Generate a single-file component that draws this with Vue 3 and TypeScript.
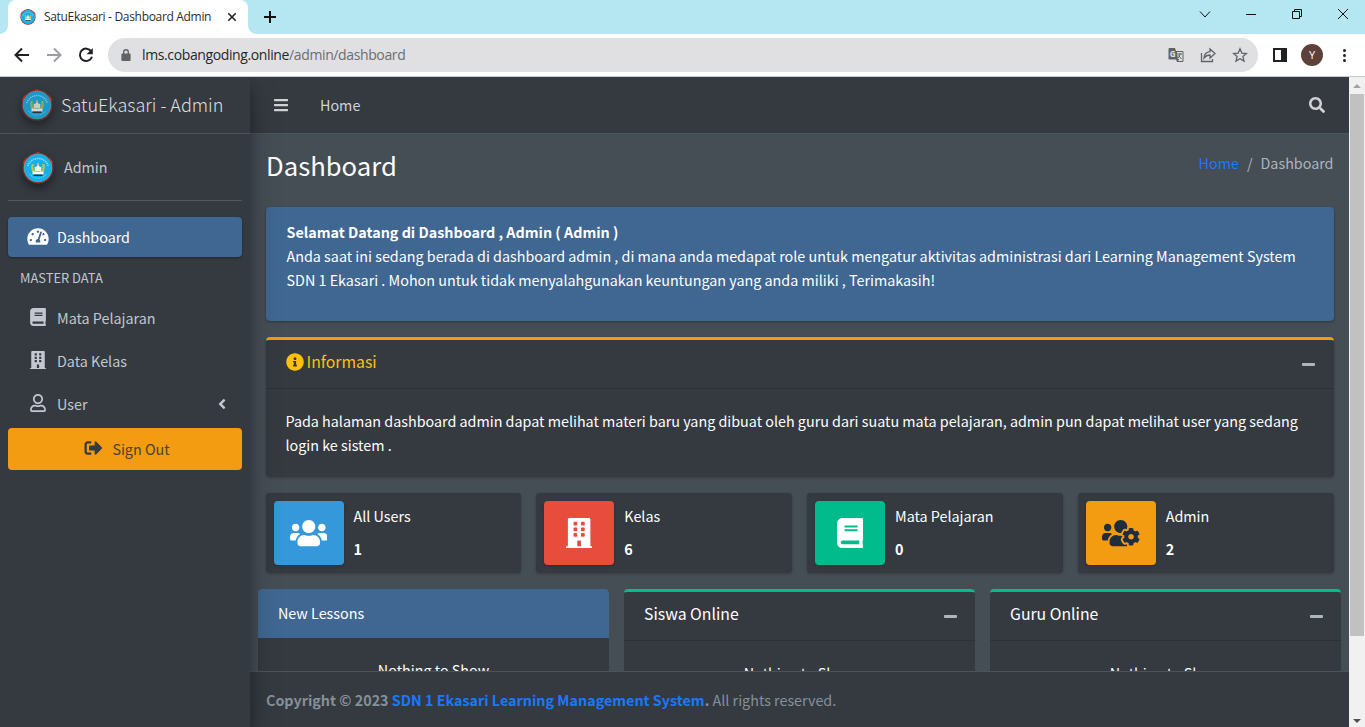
<script setup lang="ts">
interface Glyph { w: number; d: string }

const windows = [76, 172, 268]
  .map((y) => [128, 256].map((x) => `M${x} ${y}c0-6.6 5.4-12 12-12h40c6.6 0 12 5.4 12 12v40c0 6.6-5.4 12-12 12h-40c-6.6 0-12-5.4-12-12z`).join(''))
  .join('')

const icons: Record<string, Glyph> = {
  bars: { w: 448, d: 'M16 132h416c8.837 0 16-7.163 16-16V76c0-8.837-7.163-16-16-16H16C7.163 60 0 67.163 0 76v40c0 8.837 7.163 16 16 16zm0 160h416c8.837 0 16-7.163 16-16v-40c0-8.837-7.163-16-16-16H16c-8.837 0-16 7.163-16 16v40c0 8.837 7.163 16 16 16zm0 160h416c8.837 0 16-7.163 16-16v-40c0-8.837-7.163-16-16-16H16c-8.837 0-16 7.163-16 16v40c0 8.837 7.163 16 16 16z' },
  search: { w: 512, d: 'M505 442.7L405.3 343c-4.5-4.5-10.6-7-17-7H372c27.6-35.3 44-79.7 44-128C416 93.1 322.9 0 208 0S0 93.1 0 208s93.1 208 208 208c48.3 0 92.7-16.4 128-44v16.3c0 6.4 2.5 12.5 7 17l99.7 99.7c9.4 9.4 24.6 9.4 33.9 0l28.3-28.3c9.4-9.4 9.4-24.6.1-34zM208 336c-70.7 0-128-57.2-128-128 0-70.7 57.2-128 128-128 70.7 0 128 57.2 128 128 0 70.7-57.2 128-128 128z' },
  gauge: { w: 576, d: 'M288 32C128.94 32 0 160.94 0 320c0 52.8 14.25 102.26 39.06 144.8 5.61 9.62 16.3 15.2 27.44 15.2h443c11.14 0 21.83-5.58 27.44-15.2C561.75 422.26 576 372.8 576 320c0-159.06-128.94-288-288-288zm0 64c14.71 0 26.58 10.13 30.32 23.65-1.11 2.26-2.64 4.23-3.45 6.67l-9.22 27.67c-5.13 3.49-10.97 6.01-17.64 6.01-17.67 0-32-14.33-32-32S270.33 96 288 96zM96 384c-17.67 0-32-14.33-32-32s14.33-32 32-32 32 14.33 32 32-14.33 32-32 32zm48-160c-17.67 0-32-14.33-32-32s14.33-32 32-32 32 14.33 32 32-14.33 32-32 32zm246.77-72.41l-61.33 184C343.13 347.33 352 364.54 352 384c0 11.72-3.38 22.55-8.88 32H232.88c-5.5-9.45-8.88-20.28-8.88-32 0-33.94 26.5-61.43 59.9-63.59l61.34-184.01c4.17-12.56 17.73-19.45 30.36-15.17 12.57 4.19 19.35 17.79 15.17 30.36zm14.66 57.2l15.52-46.55c3.47-1.29 7.13-2.23 11.05-2.23 17.67 0 32 14.33 32 32s-14.33 32-32 32c-11.38-.01-20.89-6.28-26.57-15.22zM480 384c-17.67 0-32-14.33-32-32s14.33-32 32-32 32 14.33 32 32-14.33 32-32 32z' },
  book: { w: 448, d: 'M448 360V24c0-13.3-10.7-24-24-24H96C43 0 0 43 0 96v320c0 53 43 96 96 96h328c13.3 0 24-10.7 24-24v-16c0-7.5-3.5-14.3-8.9-18.7-4.2-15.4-4.2-59.3 0-74.7 5.4-4.3 8.9-11.1 8.9-18.6zM128 134c0-3.3 2.7-6 6-6h212c3.3 0 6 2.7 6 6v20c0 3.3-2.7 6-6 6H134c-3.3 0-6-2.7-6-6v-20zm0 64c0-3.3 2.7-6 6-6h212c3.3 0 6 2.7 6 6v20c0 3.3-2.7 6-6 6H134c-3.3 0-6-2.7-6-6v-20zm253.4 250H96c-17.7 0-32-14.3-32-32 0-17.6 14.4-32 32-32h285.4c-1.9 17.1-1.9 46.9 0 64z' },
  building: { w: 448, d: 'M436 480h-20V24c0-13.255-10.745-24-24-24H56C42.745 0 32 10.745 32 24v456H12c-6.627 0-12 5.373-12 12v20h448v-20c0-6.627-5.373-12-12-12zM192 480v-84c0-6.600 5.400-12 12-12h40c6.600 0 12 5.400 12 12v84z' + windows },
  user: { w: 448, d: 'M313.6 304c-28.7 0-42.5 16-89.6 16-47.1 0-60.8-16-89.6-16C60.2 304 0 364.2 0 438.4V464c0 26.5 21.5 48 48 48h352c26.5 0 48-21.5 48-48v-25.6c0-74.2-60.2-134.4-134.4-134.4zM400 464H48v-25.6c0-47.6 38.8-86.4 86.4-86.4 14.6 0 38.3 16 89.6 16 51.7 0 74.9-16 89.6-16 47.6 0 86.4 38.8 86.4 86.4V464zM224 288c79.5 0 144-64.5 144-144S303.5 0 224 0 80 64.5 80 144s64.5 144 144 144zm0-240c52.9 0 96 43.1 96 96s-43.1 96-96 96-96-43.1-96-96 43.1-96 96-96z' },
  signOut: { w: 512, d: 'M497 273L329 441c-15 15-41 4.5-41-17v-96H152c-13.3 0-24-10.7-24-24v-96c0-13.3 10.7-24 24-24h136V88c0-21.4 25.9-32 41-17l168 168c9.3 9.4 9.3 24.6 0 34zM192 436v-40c0-6.6-5.4-12-12-12H96c-17.7 0-32-14.3-32-32V160c0-17.7 14.3-32 32-32h84c6.600 0 12-5.400 12-12V76c0-6.600-5.400-12-12-12H96c-53 0-96 43-96 96v192c0 53 43 96 96 96h84c6.600 0 12-5.400 12-12z' },
  info: { w: 512, d: 'M256 8C119.043 8 8 119.083 8 256c0 136.997 111.043 248 248 248s248-111.003 248-248C504 119.083 392.957 8 256 8zm0 110c23.196 0 42 18.804 42 42s-18.804 42-42 42-42-18.804-42-42 18.804-42 42-42zm56 254c0 6.627-5.373 12-12 12h-88c-6.627 0-12-5.373-12-12v-24c0-6.627 5.373-12 12-12h12v-64h-12c-6.627 0-12-5.373-12-12v-24c0-6.627 5.373-12 12-12h64c6.627 0 12 5.373 12 12v100h12c6.627 0 12 5.373 12 12v24z' },
  users: { w: 640, d: 'M96 224c35.3 0 64-28.7 64-64s-28.7-64-64-64-64 28.7-64 64 28.7 64 64 64zm448 0c35.3 0 64-28.7 64-64s-28.7-64-64-64-64 28.7-64 64 28.7 64 64 64zm32 32h-64c-17.6 0-33.5 7.1-45.1 18.6 40.3 22.1 68.9 62 75.1 109.4h66c17.7 0 32-14.3 32-32v-32c0-35.3-28.7-64-64-64zm-256 0c61.9 0 112-50.1 112-112S381.9 32 320 32 208 82.1 208 144s50.1 112 112 112zm76.8 32h-8.3c-20.8 10-43.9 16-68.5 16s-47.6-6-68.5-16h-8.3C179.6 288 128 339.6 128 403.2V432c0 26.5 21.5 48 48 48h288c26.5 0 48-21.5 48-48v-28.8c0-63.6-51.6-115.2-115.2-115.2zm-223.7-13.4C161.5 263.1 145.6 256 128 256H64c-35.3 0-64 28.7-64 64v32c0 17.7 14.3 32 32 32h65.9c6.3-47.4 34.9-87.3 75.2-109.4z' },
  usersCog: { w: 640, d: 'M610.5 341.3c2.6-14.1 2.6-28.5 0-42.6l25.8-14.9c3-1.7 4.3-5.2 3.3-8.5-6.7-21.6-18.2-41.2-33.2-57.4-2.3-2.5-6-3.1-9-1.4l-25.8 14.9c-10.9-9.3-23.4-16.5-36.9-21.3v-29.8c0-3.4-2.4-6.4-5.7-7.1-22.3-5-45-4.8-66.2 0-3.3.7-5.7 3.7-5.7 7.1v29.8c-13.5 4.8-26 12-36.9 21.3l-25.8-14.9c-2.9-1.7-6.7-1.1-9 1.4-15 16.2-26.5 35.8-33.2 57.4-1 3.3.4 6.8 3.3 8.5l25.8 14.9c-2.6 14.1-2.6 28.5 0 42.6l-25.8 14.9c-3 1.7-4.3 5.2-3.3 8.5 6.7 21.6 18.2 41.1 33.2 57.4 2.3 2.5 6 3.1 9 1.4l25.8-14.9c10.9 9.3 23.4 16.5 36.9 21.3v29.8c0 3.4 2.4 6.4 5.7 7.1 22.3 5 45 4.8 66.2 0 3.3-.7 5.7-3.7 5.7-7.1v-29.8c13.5-4.8 26-12 36.9-21.3l25.8 14.9c2.9 1.7 6.7 1.1 9-1.4 15-16.2 26.5-35.8 33.2-57.4 1-3.3-.4-6.8-3.3-8.5l-25.8-14.9zM496 368.5c-26.8 0-48.5-21.8-48.5-48.5s21.8-48.5 48.5-48.5 48.5 21.8 48.5 48.5-21.7 48.5-48.5 48.5zM96 224c35.3 0 64-28.7 64-64s-28.7-64-64-64-64 28.7-64 64 28.7 64 64 64zm224 32c1.9 0 3.7-.5 5.6-.6 8.3-21.7 20.5-42.1 36.3-59.2 7.4-8 17.9-12.6 28.9-12.6 6.9 0 13.7 1.8 19.6 5.3l7.9 4.6c.8-.5 1.6-.9 2.4-1.4 7-14.6 11.2-30.8 11.2-48 0-61.9-50.1-112-112-112S208 82.1 208 144c0 61.9 50.1 112 112 112zm105.2 194.5c-2.3-1.2-4.6-2.6-6.8-3.9-8.2 4.8-15.3 9.8-27.5 9.8-10.9 0-21.4-4.6-28.9-12.6-18.3-19.8-32.3-43.9-40.2-69.6-10.7-34.5 24.9-49.7 25.8-50.3-.1-2.6-.1-5.2 0-7.8l-7.9-4.6c-3.8-2.2-7-5-9.8-8.1-3.3.2-6.5.6-9.8.6-24.6 0-47.6-6-68.5-16h-8.3C179.6 288 128 339.6 128 403.2V432c0 26.5 21.5 48 48 48h255.4c-3.7-6-6.2-12.8-6.2-20.3v-9.2zM173.1 274.6C161.5 263.1 145.6 256 128 256H64c-35.3 0-64 28.7-64 64v32c0 17.7 14.3 32 32 32h65.9c6.3-47.4 34.9-87.3 75.2-109.4z' },
  angleLeft: { w: 256, d: 'M31.7 239l136-136c9.4-9.4 24.6-9.4 33.9 0l22.6 22.6c9.4 9.4 9.4 24.6 0 33.9L127.9 256l96.4 96.4c9.4 9.4 9.4 24.6 0 33.9L201.7 409c-9.4 9.4-24.6 9.4-33.9 0l-136-136c-9.5-9.4-9.5-24.6-.1-34z' },
  minus: { w: 448, d: 'M416 208H32c-17.67 0-32 14.33-32 32v32c0 17.67 14.33 32 32 32h384c17.67 0 32-14.33 32-32v-32c0-17.67-14.33-32-32-32z' },
}

const box = (name: string) => `0 0 ${icons[name].w} 512`

const menu = [
  { label: 'Mata Pelajaran', icon: 'book', arrow: false },
  { label: 'Data Kelas', icon: 'building', arrow: false },
  { label: 'User', icon: 'user', arrow: true },
]

const stats = [
  { label: 'All Users', value: 1, icon: 'users', tone: 'blue' },
  { label: 'Kelas', value: 6, icon: 'building', tone: 'red' },
  { label: 'Mata Pelajaran', value: 0, icon: 'book', tone: 'green' },
  { label: 'Admin', value: 2, icon: 'usersCog', tone: 'orange' },
]

const onlineCards = ['Siswa Online', 'Guru Online']
</script>

<template>
  <div class="window">
    <svg class="defs" width="0" height="0">
      <symbol id="emblem" viewBox="0 0 32 32">
        <circle cx="16" cy="16" r="15.300" fill="#7d2a25" />
        <path d="M16 0l4 1.500h-8zM1 9.500l4-5-3 9zM31 9.500l-4-5 3 9zM5 27l5 4-7-6zM27 27l-5 4 7-6z" fill="#e02a1c" />
        <path d="M16 .7 30.300 11 25 28H7L1.700 11z" fill="#d0281c" />
        <circle cx="16" cy="16" r="14.300" fill="#8d9a86" />
        <circle cx="16" cy="16" r="13.700" fill="#14b0ea" />
        <path d="M5.800 14a10.700 10.700 0 0 1 20.400 0" fill="none" stroke="#a5e4f7" stroke-width="1.500" stroke-dasharray="1.200 .9" />
        <path d="M7.500 22a10.700 10.700 0 0 0 17 0" fill="none" stroke="#7fd6f3" stroke-width="1.100" stroke-dasharray="1 1.100" />
        <path d="M10.800 12c-1.200 4 .2 7 2.800 8.500M21.200 12c1.200 4-.2 7-2.800 8.500" fill="none" stroke="#b9c24a" stroke-width="2.300" />
        <path d="M16 10.500l1.300 4 2.200.8-.7 4.200h-5.600l-.7-4.200 2.200-.8z" fill="#f3f0dc" />
        <path d="M16 10.300l1 3.200h-2z" fill="#e7b53a" />
        <path d="M10.500 19.200l3.500.8h4l3.500-.8v3.200h-11z" fill="#fff" />
        <path d="M11.500 22.400h9v1.500h-9z" fill="#1d3547" />
      </symbol>
    </svg>

    <header class="tabstrip">
      <div class="tab">
        <svg class="favicon"><use href="#emblem" /></svg>
        <span class="tab-title">SatuEkasari - Dashboard Admin</span>
        <svg class="tab-close" viewBox="0 0 10 10"><path d="M1.300 1.300l7.400 7.400M8.700 1.300L1.300 8.700" /></svg>
      </div>
      <svg class="new-tab" viewBox="0 0 12 12"><path d="M6 0v12M0 6h12" /></svg>
      <div class="controls">
        <svg viewBox="0 0 12 12"><path d="M1 3.500l5 5.500 5-5.500" /></svg>
        <svg viewBox="0 0 12 12"><path d="M1 6.500h10" /></svg>
        <svg viewBox="0 0 12 12"><path d="M1.500 3.500h7v7h-7zM3.500 3.500v-2h7v7h-2" /></svg>
        <svg viewBox="0 0 12 12"><path d="M1 1l10 10M11 1L1 11" /></svg>
      </div>
    </header>

    <div class="toolbar">
      <svg class="nav-icon" viewBox="0 0 16 16"><path d="M15 8H2M8 1.500L1.500 8 8 14.500" /></svg>
      <svg class="nav-icon faded" viewBox="0 0 16 16"><path d="M1 8h13M8 1.500L14.500 8 8 14.500" /></svg>
      <svg class="nav-icon" viewBox="0 0 16 16"><path d="M13.300 4.400A6.200 6.200 0 1 0 14 9.800" /><path class="solid" d="M14.800 1v6.200H8.600z" /></svg>
      <div class="address">
        <svg class="lock" viewBox="0 0 10 13"><path d="M1 5h8a1 1 0 0 1 1 1v6a1 1 0 0 1-1 1H1a1 1 0 0 1-1-1V6a1 1 0 0 1 1-1z" /><path class="shackle" d="M2.500 5.500V3.300a2.500 2.500 0 0 1 5 0v2.200" /></svg>
        <span class="url">lms.cobangoding.online<span class="path">/admin/dashboard</span></span>
        <div class="address-tools">
          <svg viewBox="0 0 16 16"><path class="solid" d="M1.500 1H7l1 3h6.500a1 1 0 0 1 1 1v9a1 1 0 0 1-1 1H9l-1-2.500H1.500a1 1 0 0 1-1-1V2a1 1 0 0 1 1-1z" /><path class="paper" d="M9 5h5.500v9H10l1.500-2H10z" /><text class="g" x="1.700" y="9.500">G</text><path class="thin" d="M9.500 7h4.500M12 6v1c0 1.500-.8 2.800-2 4M10.500 8.500l3 3.500" /></svg>
          <svg viewBox="0 0 16 16"><path d="M1.500 6v8.500h11V12" /><path d="M4 11c.3-4 2.500-6 6-6.300V2l5 4.500-5 4.500V8C7.500 8 5.500 9 4 11z" /></svg>
          <svg viewBox="0 0 16 16"><path d="M8 1.800l1.800 4.300 4.600.4-3.500 3.100 1.100 4.500L8 11.700l-4 2.400 1.100-4.500-3.500-3.100 4.600-.4z" /></svg>
        </div>
      </div>
      <svg class="panel" viewBox="0 0 14 14"><path d="M1 1h12v12H1z" /><path class="solid" d="M9 1h4v12H9z" /></svg>
      <span class="avatar">Y</span>
      <span class="kebab"><i /><i /><i /></span>
    </div>

    <div class="page">
      <aside class="sidebar">
        <div class="brand">
          <svg class="emblem"><use href="#emblem" /></svg>
          <span>SatuEkasari - Admin</span>
        </div>
        <div class="profile">
          <svg class="emblem"><use href="#emblem" /></svg>
          <span>Admin</span>
        </div>
        <nav class="menu">
          <a class="item active">
            <span class="slot"><svg class="fa wide" :viewBox="box('gauge')"><path :d="icons.gauge.d" /></svg></span>
            <span>Dashboard</span>
          </a>
          <div class="section">MASTER DATA</div>
          <a v-for="m in menu" :key="m.label" class="item">
            <span class="slot"><svg class="fa" :viewBox="box(m.icon)"><path :d="icons[m.icon].d" /></svg></span>
            <span>{{ m.label }}</span>
            <svg v-if="m.arrow" class="arrow" :viewBox="box('angleLeft')"><path :d="icons.angleLeft.d" /></svg>
          </a>
          <button class="sign-out">
            <svg :viewBox="box('signOut')"><path :d="icons.signOut.d" /></svg>
            <span>Sign Out</span>
          </button>
        </nav>
      </aside>

      <main class="main">
        <div class="navbar">
          <svg class="burger" :viewBox="box('bars')"><path :d="icons.bars.d" /></svg>
          <span>Home</span>
          <svg class="search" :viewBox="box('search')"><path :d="icons.search.d" /></svg>
        </div>

        <div class="content">
          <div class="heading">
            <h1>Dashboard</h1>
            <div class="crumbs"><a>Home</a><span class="slash">/</span><span>Dashboard</span></div>
          </div>

          <section class="callout">
            <b>Selamat Datang di Dashboard , Admin ( Admin )</b><br />
            Anda saat ini sedang berada di dashboard admin , di mana anda medapat role untuk mengatur aktivitas administrasi dari Learning Management System<br />
            SDN 1 Ekasari . Mohon untuk tidak menyalahgunakan keuntungan yang anda miliki , Terimakasih!
          </section>

          <section class="card info-card">
            <div class="card-head warn">
              <svg class="info-icon" :viewBox="box('info')"><path :d="icons.info.d" /></svg>
              <h3>Informasi</h3>
              <svg class="minus" :viewBox="box('minus')"><path :d="icons.minus.d" /></svg>
            </div>
            <p class="info-text">
              Pada halaman dashboard admin dapat melihat materi baru yang dibuat oleh guru dari suatu mata pelajaran, admin pun dapat melihat user yang sedang<br />
              login ke sistem .
            </p>
          </section>

          <div class="stats">
            <div v-for="s in stats" :key="s.label" class="stat">
              <div class="stat-icon" :class="s.tone"><svg :viewBox="box(s.icon)"><path :d="icons[s.icon].d" /></svg></div>
              <div class="stat-body"><span>{{ s.label }}</span><b>{{ s.value }}</b></div>
            </div>
          </div>

          <div class="lists">
            <section class="list-card">
              <div class="lessons-head">New Lessons</div>
              <div class="empty">Nothing to Show</div>
            </section>
            <section v-for="t in onlineCards" :key="t" class="list-card online">
              <div class="card-head">
                <h3>{{ t }}</h3>
                <svg class="minus" :viewBox="box('minus')"><path :d="icons.minus.d" /></svg>
              </div>
              <div class="empty">Nothing to Show</div>
            </section>
          </div>
        </div>

        <footer class="footer">
          <b>Copyright © 2023 <a>SDN 1 Ekasari Learning Management System</a>.</b> All rights reserved.
        </footer>
      </main>

      <div class="scrollbar">
        <svg viewBox="0 0 8 4"><path d="M0 4l4-4 4 4z" fill="#a3a3a3" /></svg>
        <div class="thumb" />
        <svg viewBox="0 0 8 4"><path d="M0 0h8L4 4z" fill="#505050" /></svg>
      </div>
    </div>
  </div>
</template>

<style>
body { margin: 0; overflow: hidden; }
</style>

<style scoped>
* { box-sizing: border-box; }
.window { width: 1365px; height: 727px; display: flex; flex-direction: column; overflow: hidden; font-family: "Noto Sans CJK SC", "Noto Sans", sans-serif; font-size: 14.33px; line-height: 24px; color: #fff; }
.defs { position: absolute; }
svg { flex: none; display: block; fill: currentColor; }

.tabstrip { height: 34px; flex: none; background: #b4e7f2; display: flex; align-items: center; color: #111; font-family: "Open Sans", "Noto Sans", sans-serif; }
.tab { width: 240px; height: 34px; margin-left: 8px; padding: 0 11px 0 12px; background: #fff; border-radius: 8px 8px 0 0; display: flex; align-items: center; position: relative; }
.tab::before, .tab::after { content: ""; position: absolute; bottom: 0; width: 8px; height: 8px; }
.tab::before { left: -8px; background: radial-gradient(circle at 0 0, transparent 7.500px, #fff 8px); }
.tab::after { right: -8px; background: radial-gradient(circle at 100% 0, transparent 7.500px, #fff 8px); }
.favicon { width: 16px; height: 16px; }
.tab-title { margin-left: 8px; font-size: 12px; letter-spacing: -0.32px; white-space: nowrap; color: #2b2d30; }
.tab-close { width: 10px; height: 10px; margin-left: auto; stroke: #222; stroke-width: 1.600; }
.new-tab { width: 12px; height: 12px; margin-left: 16px; stroke: #111; stroke-width: 2; }
.controls { margin-left: auto; display: flex; gap: 34px; padding-right: 16px; margin-top: -6px; }
.controls svg { width: 12px; height: 12px; fill: none; stroke: #111; stroke-width: 1; }

.toolbar { height: 43px; flex: none; background: #fff; border-bottom: 1px solid #c4cdd0; display: flex; align-items: center; padding-left: 14px; color: #202124; font-family: "Open Sans", "Noto Sans", sans-serif; }
.nav-icon { width: 16px; height: 16px; margin-right: 16px; fill: none; stroke: #202124; stroke-width: 2; }
.nav-icon.faded { stroke: #9a9c9f; }
.nav-icon .solid { fill: #202124; stroke: none; }
.address { width: 1150px; height: 34px; margin-left: -2px; border-radius: 17px; background: #e0e0e3; display: flex; align-items: center; padding: 0 10px 0 13px; }
.lock { width: 10px; height: 12px; fill: #5f6368; }
.shackle { fill: none; stroke: #5f6368; stroke-width: 1.500; }
.url { margin-left: 11px; font-size: 14px; letter-spacing: -0.38px; color: #25272a; }
.path { color: #6a6d71; }
.address-tools { margin-left: auto; display: flex; gap: 16px; }
.address-tools svg { width: 16px; height: 16px; fill: none; stroke: #5f6368; stroke-width: 1.300; }
.address-tools .solid { fill: #5f6368; stroke: none; }
.address-tools .paper { fill: #e0e0e3; stroke: none; }
.address-tools .thin { stroke-width: 1; }
.address-tools .g { font-size: 8px; font-weight: 700; fill: #e0e0e3; stroke: none; }
.panel { width: 14px; height: 14px; margin-left: 15px; fill: none; stroke: #202124; stroke-width: 2; }
.panel .solid { fill: #202124; }
.avatar { width: 22px; height: 22px; margin-left: 14px; border-radius: 50%; background: #5d4037; color: #fff; font-size: 11px; line-height: 22px; text-align: center; }
.kebab { margin-left: 20px; display: flex; flex-direction: column; gap: 2px; }
.kebab i { width: 3px; height: 3px; border-radius: 50%; background: #202124; }

.page { flex: 1; display: flex; min-height: 0; }
.sidebar { width: 250px; flex: none; background: #343a40; color: #c2c7d0; position: relative; z-index: 2; box-shadow: 0 14px 28px rgba(0,0,0,.25), 0 10px 10px rgba(0,0,0,.22); clip-path: inset(0 -40px 0 0); }
.brand { height: 57px; padding-bottom: 2px; border-bottom: 1px solid #4b545c; display: flex; align-items: center; padding-left: 21px; font-size: 18px; font-weight: 300; color: rgba(255,255,255,.85); }
.emblem { width: 32px; height: 32px; border-radius: 50%; box-shadow: 0 3px 6px rgba(0,0,0,.19), 0 5px 8px rgba(0,0,0,.25); }
.brand .emblem { opacity: .8; margin-top: 1px; }
.brand span { margin-left: 8px; }
.profile { height: 67px; margin: 0 8px; padding-left: 13.500px; border-bottom: 1px solid #4f5962; display: flex; align-items: center; }
.profile .emblem { margin-top: 1px; }
.profile span { margin-left: 10.500px; }
.menu { padding: 16px 8px 0; }
.item { height: 43px; padding: 0 16px 1px 17px; display: flex; align-items: center; border-radius: 4px; }
.item.active { height: 40px; padding-bottom: 0; background: #3f6791; color: #fff; box-shadow: 0 1px 3px rgba(0,0,0,.12), 0 1px 2px rgba(0,0,0,.24); }
.slot { width: 26px; margin-right: 6px; display: flex; justify-content: center; }
.fa { width: 16px; height: 18px; margin-top: -3px; }
.fa.wide { width: 22px; height: 19px; margin-top: -2px; }
.section { height: 40px; padding: 9px 12px; font-size: 12.900px; }
.arrow { width: 8px; height: 16px; margin-left: auto; }
.sign-out { width: 100%; height: 42px; margin-top: 2px; padding: 0 0 0 4px; border: 0; border-radius: 4px; background: #f39c12; color: #4a4331; font: inherit; display: flex; align-items: center; justify-content: center; gap: 9px; }
.sign-out svg { width: 19px; height: 18px; margin-top: -2px; color: #343a40; }

.main { width: 1099px; flex: none; background: #454d55; display: flex; flex-direction: column; min-height: 0; }
.navbar { height: 57px; flex: none; background: #343a40; border-bottom: 1px solid #4b545c; display: flex; align-items: center; padding: 0 24px; color: #d0d2d4; }
.burger { width: 14px; height: 16px; }
.navbar span { margin-left: 32px; }
.search { width: 16px; height: 16px; margin-left: auto; }
.content { flex: 1; min-height: 0; overflow: hidden; padding: 13px 15px 0 16px; }
.heading { height: 60px; padding-right: .5px; display: flex; justify-content: space-between; }
h1 { margin: 0; font-size: 25.700px; font-weight: 400; line-height: 35px; }
.crumbs { display: flex; padding-top: 4px; color: #adb5bd; }
.crumbs a, .footer a { color: #1a78ff; }
.slash { margin: 0 8px; }
.callout { height: 114px; padding: 13px 20.500px; border-radius: 4px; background: #3f6791; box-shadow: 0 1px 3px rgba(0,0,0,.12), 0 1px 2px rgba(0,0,0,.24); white-space: nowrap; }
.card { height: 140px; margin-top: 16px; border-top: 3px solid #f39c12; border-radius: 4px; background: #343a40; box-shadow: 0 0 1px rgba(0,0,0,.125), 0 1px 3px rgba(0,0,0,.2); }
.card-head { height: 49px; padding: 0 18px 5px 20px; border-bottom: 1px solid rgba(0,0,0,.125); display: flex; align-items: center; }
.card-head.warn { color: #ffc107; padding-right: 18.500px; padding-left: 19.500px; }
.info-icon { width: 18px; height: 18px; margin-right: 3px; }
h3 { margin: 0; font-size: 15.800px; font-weight: 400; }
.minus { width: 13px; height: 15px; margin: 5px .5px 0 auto; color: #adb5bd; }
.info-text { margin: 0; padding: 20px 19.500px; white-space: nowrap; }
.stats { margin: 16px .5px 0 -.5px; display: grid; grid-template-columns: repeat(4, 1fr); gap: 15px; }
.stat { height: 80px; padding: 8px; border-radius: 4px; background: #343a40; display: flex; box-shadow: 0 0 1px rgba(0,0,0,.125), 0 1px 3px rgba(0,0,0,.2); }
.stat-icon { width: 70px; height: 64px; border-radius: 4px; display: flex; align-items: center; justify-content: center; box-shadow: 0 1px 3px rgba(0,0,0,.2); }
.stat-icon svg { height: 30px; }
.blue { background: #3498db; }
.red { background: #e74c3c; }
.green { background: #00bc8c; }
.orange { background: #f39c12; color: #1f2d3d; }
.stat-body { margin-left: 10px; display: flex; flex-direction: column; gap: 9px; padding-top: 3px; }
.lists { margin: 16px -7px 0 -8px; display: grid; grid-template-columns: repeat(3, 1fr); gap: 15px; }
.list-card { height: 140px; border-radius: 4px; background: #343a40; overflow: hidden; }
.online { border-top: 3px solid #00bc8c; }
.lessons-head { height: 49px; padding: 12px 20px; background: #3f6791; }
.empty { padding-top: 20px; text-align: center; }
.footer { height: 56px; flex: none; padding: 16px 16px; background: #343a40; border-top: 1px solid #4b545c; color: #869099; }

.scrollbar { width: 16px; background: #f1f1f1; display: flex; flex-direction: column; align-items: center; padding: 7px 0 4px; }
.scrollbar svg { width: 8px; height: 4px; }
.thumb { width: 14px; height: 542px; margin: 6px 0 auto; background: #c1c1c1; }
</style>
